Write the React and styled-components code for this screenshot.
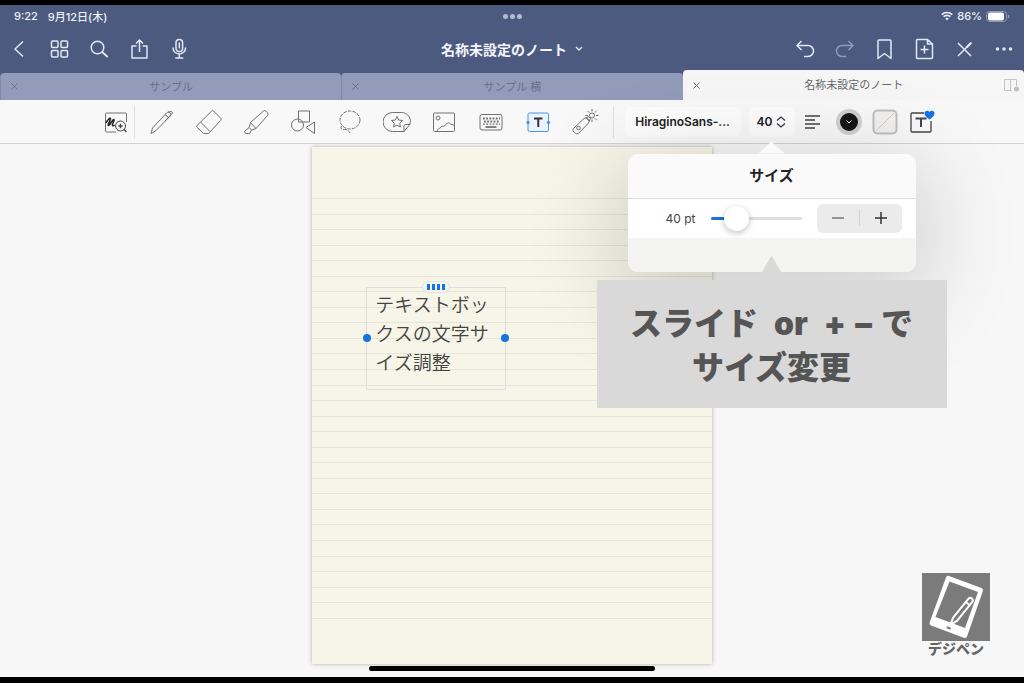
import { useState } from "react";
import styled, { createGlobalStyle } from "styled-components";

const tabs = [
  { id: 1, title: "サンプル" },
  { id: 2, title: "サンプル 横" },
  { id: 3, title: "名称未設定のノート" },
];

const PenIcon = () => (
  <Svg viewBox="0 0 28 28">
    <path d="M3 25.500l1.500-5.500L18.500 5c1-1 2.500-1 3.500 0s1 2.300 0 3.300L7.500 23z M17 6.500l4 3.500 M20 4l3.500-.5 1 1.500L17 13" />
  </Svg>
);

const EraserIcon = () => (
  <Svg viewBox="0 0 28 28">
    <path d="M16.500 3.200a1.500 1.500 0 0 1 2.200 0l7 7a1.500 1.500 0 0 1 0 2.200L13.500 25.500H8.500L2.300 19.500a1.500 1.500 0 0 1 0-2.200z M5.500 14l9.500 9.500" />
  </Svg>
);

const HighlighterIcon = () => (
  <Svg viewBox="0 0 28 28">
    <path d="M8.500 14.500L21.500 3a2 2 0 0 1 2.500.2l1.500 1.600a2 2 0 0 1 .2 2.500L14 20.500z M8.500 14.500l-1.500 5 2.500 2.500 4.500-1.500 M7 19.500L2.500 23.500l1 2h4l2-3.500" />
  </Svg>
);

const ShapesIcon = () => (
  <Svg viewBox="0 0 28 28">
    <rect x="9.500" y="3" width="11" height="11" />
    <circle cx="8.500" cy="17" r="6" />
    <path d="M25.500 14v11.500L17 19.500z" />
  </Svg>
);

const LassoIcon = () => (
  <Svg viewBox="0 0 28 28">
    <ellipse cx="14" cy="12" rx="10" ry="9" strokeDasharray="3.500 1.200" />
    <path d="M5.500 18c-1.500 2.500.5 4 3 3.500 2.500-.3 4 1 5.500 3.500" strokeDasharray="4 1" />
  </Svg>
);

const StickerIcon = () => (
  <Svg viewBox="0 0 28 28">
    <path d="M21 23.500H9.500a9.500 9.500 0 0 1 0-19h9a8.800 8.800 0 0 1 8.300 12z M21 23.500v-5.500c0-1 .5-1.500 1.500-1.500h4.300" />
    <path d="M14 8.500l1.700 3.500 3.800.5-2.800 2.700.7 3.800-3.400-1.800-3.400 1.800.7-3.800-2.800-2.700 3.800-.5z" />
  </Svg>
);

const PictureIcon = () => (
  <Svg viewBox="0 0 28 28">
    <rect x="3.500" y="5" width="21" height="18.500" rx="1" />
    <circle cx="8" cy="10" r="2" />
    <path d="M7 23.500c1-4 3-2.500 4-4.500s2.500.5 4-1.500 4-3.500 5-2 2.500.5 4.500 2" />
  </Svg>
);

const KeyboardIcon = () => (
  <Svg viewBox="0 0 28 28">
    <rect x="3" y="6.500" width="22" height="15.500" rx="2" />
    <path d="M6 10.500h17M7 13.500h15" strokeWidth="2" strokeDasharray="1.800 1.400" />
    <path d="M6 16.200h17" strokeWidth="1.200" strokeDasharray="1.800 1.400" />
    <path d="M8.500 19h11" strokeWidth="1.800" />
  </Svg>
);

const TextIcon = () => (
  <Svg viewBox="0 0 28 28" stroke="#4f94ea">
    <rect x="4" y="5" width="20.500" height="18.500" rx="1.500" fill="#eaf3fe" />
    <path d="M10 10.500h8.500M14.250 10v9" stroke="#333" strokeWidth="2" />
    <circle cx="4" cy="14.500" r="1.200" fill="#3b86e8" />
    <circle cx="24.500" cy="14.500" r="1.200" fill="#3b86e8" />
  </Svg>
);

const LaserIcon = () => (
  <Svg viewBox="0 0 28 28">
    <path d="M2.500 20.500L13 10.500c1.500-1 3-.5 4 .5s1.500 2.500.5 4L8 25c-1.500 1.200-3 1-4.500-.3S1.500 22 2.500 20.500z M15 9.800l3.300 3.400 1.200-2.700-1.800-1.800z" />
    <circle cx="7.500" cy="20" r="1.800" />
    <circle cx="21" cy="7.500" r="2.500" />
    <path d="M21 1v2.500M21 11.500V14M14.500 7.500h2.500M25 7.500h2.500M16.500 3l1.700 1.700M24 10.500l1.700 1.700M25.500 3l-1.700 1.700" />
  </Svg>
);

const tools = [
  { name: "ペン", Icon: PenIcon },
  { name: "消しゴム", Icon: EraserIcon },
  { name: "蛍光ペン", Icon: HighlighterIcon },
  { name: "図形", Icon: ShapesIcon },
  { name: "なげなわ", Icon: LassoIcon },
  { name: "ステッカー", Icon: StickerIcon },
  { name: "画像", Icon: PictureIcon },
  { name: "キーボード", Icon: KeyboardIcon },
  { name: "テキスト", Icon: TextIcon },
  { name: "レーザー", Icon: LaserIcon },
];

const StatusBar = () => (
  <StyledStatus>
    <StatusSide>
      <span>9:22</span>
      <span>9月12日(木)</span>
    </StatusSide>
    <Multitask aria-label="マルチタスク">
      <i />
      <i />
      <i />
    </Multitask>
    <StatusSide $end>
      <svg width="12" height="10" viewBox="0 0 12 10" fill="none" stroke="#eef1f8">
        <path d="M.8 3.600a7.500 7.500 0 0 1 10.400 0M2.600 5.700a4.800 4.800 0 0 1 6.800 0" strokeWidth="1.700" />
        <path d="M6 9.500L4.200 7.500a2.600 2.600 0 0 1 3.600 0z" fill="#eef1f8" stroke="none" />
      </svg>
      <span>86%</span>
      <svg width="24" height="11" viewBox="0 0 24 11" fill="none">
        <rect x=".5" y=".5" width="20" height="10" rx="3" stroke="#8f9ab6" />
        <rect x="2" y="1.500" width="16" height="8" rx="2" fill="#fff" />
        <path d="M22.500 4v3" stroke="#8f9ab6" strokeWidth="1.500" />
      </svg>
    </StatusSide>
  </StyledStatus>
);

const NavBar = () => (
  <StyledNav>
    <NavSide>
      <NavButton aria-label="戻る">
        <Svg viewBox="0 0 24 24" $size={24}>
          <path d="M15 4.500L7 12l8 7.500" />
        </Svg>
      </NavButton>
      <NavButton aria-label="一覧">
        <Svg viewBox="0 0 24 24" $size={24}>
          <rect x="3.500" y="4" width="6.500" height="6.500" rx="1" />
          <rect x="13" y="4" width="6.500" height="6.500" rx="1" />
          <rect x="3.500" y="13.500" width="6.500" height="6.500" rx="1" />
          <rect x="13" y="13.500" width="6.500" height="6.500" rx="1" />
        </Svg>
      </NavButton>
      <NavButton aria-label="検索">
        <Svg viewBox="0 0 24 24" $size={24}>
          <circle cx="9.500" cy="10.500" r="6.300" />
          <path d="M14.200 15l5.500 5" strokeWidth="1.800" />
        </Svg>
      </NavButton>
      <NavButton aria-label="共有">
        <Svg viewBox="0 0 24 24" $size={24}>
          <path d="M8.500 9H4v12h15V9h-4.500M11.500 15V3M8 6.500l3.500-3.500L15 6.500" />
        </Svg>
      </NavButton>
      <NavButton aria-label="録音">
        <Svg viewBox="0 0 24 24" $size={24}>
          <rect x="8" y="2.500" width="6.600" height="12" rx="3.300" />
          <path d="M11.300 5.500v6M5 10.500c0 8.500 12.600 8.500 12.600 0M11.300 17v4M7.300 21h8" />
        </Svg>
      </NavButton>
    </NavSide>
    <NoteTitle>
      名称未設定のノート
      <svg width="8" height="6" viewBox="0 0 8 6" fill="none" stroke="#dfe4f0" strokeWidth="1.400">
        <path d="M1 1l3 3 3-3" />
      </svg>
    </NoteTitle>
    <NavSide $end>
      <NavButton aria-label="元に戻す">
        <Svg viewBox="0 0 24 24" $size={24}>
          <path d="M9.500 4L5 8.500 9.500 13M5 8.500h11a5.500 5.500 0 0 1 0 11h-4" />
        </Svg>
      </NavButton>
      <NavButton aria-label="やり直す" $dim>
        <Svg viewBox="0 0 24 24" $size={24}>
          <path d="M16.500 4L21 8.500 16.500 13M21 8.500H10a5.500 5.500 0 0 0 0 11h4" />
        </Svg>
      </NavButton>
      <NavButton aria-label="ブックマーク">
        <Svg viewBox="0 0 24 24" $size={24}>
          <path d="M6 4a1 1 0 0 1 1-1h11a1 1 0 0 1 1 1v17.500l-6.500-5-6.500 5z" />
        </Svg>
      </NavButton>
      <NavButton aria-label="ページを追加">
        <Svg viewBox="0 0 24 24" $size={24}>
          <path d="M5.500 2.500h10l5 4.500v13.500a1 1 0 0 1-1 1h-14a1 1 0 0 1-1-1v-17a1 1 0 0 1 1-1z M15.500 2.500V7h5 M12.500 8.500v8M8.500 12.500h8" />
        </Svg>
      </NavButton>
      <NavButton aria-label="閲覧モード">
        <Svg viewBox="0 0 24 24" $size={24}>
          <path d="M6 6l13 13M6 19L19.500 5.500" />
          <path d="M14.500 10.500l4.500-4.500" strokeWidth="2.200" />
        </Svg>
      </NavButton>
      <NavButton aria-label="その他">
        <Svg viewBox="0 0 24 24" $size={24} fill="currentColor">
          <circle cx="5.500" cy="12" r="1" />
          <circle cx="12" cy="12" r="1" />
          <circle cx="18.500" cy="12" r="1" />
        </Svg>
      </NavButton>
    </NavSide>
  </StyledNav>
);

const TabBar = ({ active, onSelect }) => (
  <StyledTabs>
    {tabs.map(({ id, title }) => (
      <Tab key={id} $active={id === active}>
        <TabClose aria-label={`${title}を閉じる`}>
          <svg width="7" height="7" viewBox="0 0 7 7" stroke="currentColor">
            <path d="M.5.5l6 6M6.500.5l-6 6" />
          </svg>
        </TabClose>
        <TabTitle onClick={() => onSelect(id)}>{title}</TabTitle>
        {id === active ? (
          <TabClose aria-label="分割表示">
            <svg width="17" height="14" viewBox="0 0 17 14" fill="none" stroke="#c4c4c4">
              <path d="M9 12.500H1.500v-11h12V8M7.500 1.500v11" />
              <circle cx="13.500" cy="11" r="2.500" fill="#c0c0c0" stroke="none" />
            </svg>
          </TabClose>
        ) : (
          <span />
        )}
      </Tab>
    ))}
  </StyledTabs>
);

const SizePopover = ({ size, onChange }) => (
  <PopoverLayer>
    <StyledPopover>
      <PopoverTitle>サイズ</PopoverTitle>
      <PopoverRow>
        <label htmlFor="size">{size} pt</label>
        <Slider
          id="size"
          type="range"
          min="0"
          max="200"
          value={size}
          style={{ "--fill": `${14 + (size / 200) * 72}%` }}
          onChange={(event) => onChange(Number(event.target.value))}
        />
        <Stepper>
          <button aria-label="小さく" onClick={() => onChange(size - 1)}>
            <svg width="14" height="14" viewBox="0 0 14 14" stroke="#777" strokeWidth="1.500">
              <path d="M1 7h12" />
            </svg>
          </button>
          <button aria-label="大きく" onClick={() => onChange(size + 1)}>
            <svg width="14" height="14" viewBox="0 0 14 14" stroke="#333" strokeWidth="1.500">
              <path d="M1 7h12M7 1v12" />
            </svg>
          </button>
        </Stepper>
      </PopoverRow>
      <PopoverFoot />
    </StyledPopover>
    <Callout>
      スライド&ensp;or&ensp;+ − で
      <br />
      サイズ変更
    </Callout>
  </PopoverLayer>
);

const Toolbar = ({ size, setSize }) => (
  <StyledToolbar>
    <ToolButton $width={36} aria-label="ズーム">
      <Svg viewBox="0 0 28 28">
        <path d="M24.500 14V6a1 1 0 0 0-1-1h-19a1 1 0 0 0-1 1v17a1 1 0 0 0 1 1H14" />
        <path d="M4 15c1.500-3 4-5.500 4.500-4.500.5 1.500-3.500 6.500-2 7 1.500 0 4-6.500 5.500-6 1 1-2.500 5-1.500 6 .5.500 1.500 0 2-.500" stroke="#222" strokeWidth="1.600" />
        <circle cx="18.500" cy="18" r="5" fill="#f8f8f8" stroke="#444" />
        <path d="M18.500 15.800v4.400M16.300 18h4.400M22 21.500l2.500 2.500" stroke="#444" strokeWidth="1.300" />
      </Svg>
    </ToolButton>
    <Divider />
    <Tools>
      {tools.map(({ name, Icon }) => (
        <ToolButton key={name} $width={47} aria-label={name}>
          <Icon />
        </ToolButton>
      ))}
    </Tools>
    <Divider />
    <Options>
      <OptionButton $width={116}>HiraginoSans-...</OptionButton>
      <SizeAnchor>
        <OptionButton $width={46}>
          {size}
          <svg width="10" height="14" viewBox="0 0 10 14" fill="none" stroke="#333" strokeWidth="1.200">
            <path d="M1 5.500L5 2l4 3.500M1 8.500L5 12l4-3.500" />
          </svg>
        </OptionButton>
        <SizePopover size={size} onChange={setSize} />
      </SizeAnchor>
    </Options>
    <ToolButton $width={36} aria-label="行揃え">
      <svg width="16" height="16" viewBox="0 0 16 16" stroke="#444" strokeWidth="1.300">
        <path d="M0 2h15M0 6h10M0 10h15M0 14h10" />
      </svg>
    </ToolButton>
    <ToolButton $width={36} aria-label="文字色">
      <ColorDot>
        <svg width="6" height="4" viewBox="0 0 6 4" fill="none" stroke="#fff">
          <path d="M.5.5L3 3 5.500.5" />
        </svg>
      </ColorDot>
    </ToolButton>
    <ToolButton $width={36} aria-label="背景色">
      <svg width="26" height="26" viewBox="0 0 26 26" fill="none">
        <rect x="1.500" y="1.500" width="23" height="23" rx="4" fill="#f1f0ef" stroke="#bebebe" strokeWidth="2" />
        <path d="M4 22L22 4" stroke="#dccfc0" />
      </svg>
    </ToolButton>
    <ToolButton $width={36} aria-label="お気に入りスタイル">
      <svg width="28" height="28" viewBox="0 0 28 28" fill="none" stroke="#444" strokeWidth="1.300">
        <path d="M17 5H5a1 1 0 0 0-1 1v17a1 1 0 0 0 1 1h18a1 1 0 0 0 1-1V13" />
        <path d="M9.500 11.500V10.500h9v1M14 10v9" strokeWidth="2" />
        <path d="M22.500 11.500c-3-2-5-3.500-5-6.200 0-2.800 3.500-3.500 5-1.200 1.500-2.300 5-1.600 5 1.200 0 2.700-2 4.200-5 6.200z" fill="#1474e4" stroke="none" />
      </svg>
    </ToolButton>
  </StyledToolbar>
);

const Note = () => {
  const [text, setText] = useState("テキストボックスの文字サイズ調整");

  return (
    <Page>
      <Rules>
        {Array.from({ length: 28 }, (_, i) => (
          <hr key={i} />
        ))}
      </Rules>
      <TextBox>
        <Grip>
          <i />
          <i />
          <i />
          <i />
        </Grip>
        <textarea
          aria-label="テキストボックス"
          rows="3"
          spellCheck="false"
          value={text}
          onChange={(event) => setText(event.target.value)}
        />
        <Handle />
        <Handle $right />
      </TextBox>
    </Page>
  );
};

const Brand = () => (
  <StyledBrand>
    <svg width="68" height="68" viewBox="0 0 68 68" fill="none">
      <rect width="68" height="68" fill="#7b7b7b" />
      <path d="M27 3l32.500 12a2.500 2.500 0 0 1 1.300 3.200L45 63.500a2.500 2.500 0 0 1-3.200 1.300L9 52.500a2.500 2.500 0 0 1-1.300-3.200L24 4.500a2.300 2.300 0 0 1 3-1.500z" fill="#fff" />
      <path d="M27.500 8.500L56 19 43 55 13.500 44z" fill="#7b7b7b" />
      <path d="M25.500 54.500l2.500 1" stroke="#7b7b7b" strokeWidth="2" strokeLinecap="round" />
      <g transform="translate(30 50) rotate(39)" stroke="#fff" strokeWidth="2">
        <path d="M-1 0L-2.500-5V-29a2.500 2.500 0 0 1 5 0V-5L1 0z" />
        <path d="M-3-25h6" />
      </g>
    </svg>
    デジペン
  </StyledBrand>
);

export default function App() {
  const [active, setActive] = useState(3);
  const [size, setSize] = useState(40);

  return (
    <Screen>
      <GlobalStyle />
      <StatusBar />
      <NavBar />
      <TabBar active={active} onSelect={setActive} />
      <Toolbar size={size} setSize={setSize} />
      <Workspace>
        <Note />
        <Brand />
      </Workspace>
      <HomeBar>
        <i />
      </HomeBar>
    </Screen>
  );
}

const GlobalStyle = createGlobalStyle`
  * {
    box-sizing: border-box;
  }

  body {
    margin: 0;
    background: #000;
    font-family: Inter, "Noto Sans CJK JP", sans-serif;
    color: #222;
  }

  button {
    border: 0;
    padding: 0;
    background: none;
    font: inherit;
    color: inherit;
  }
`;

const Screen = styled.div`
  display: flex;
  flex-direction: column;
  min-height: 100vh;
  border-top: 5px solid #000;
  border-bottom: 6px solid #000;
  background: #4c5a80;
  overflow: hidden;
`;

const Svg = styled.svg.attrs((props) => ({
  fill: props.fill || "none",
  stroke: props.stroke || "currentColor",
}))`
  width: ${(props) => props.$size || 28}px;
  height: ${(props) => props.$size || 28}px;
  stroke-linejoin: round;
  flex: none;
`;

const StyledStatus = styled.header`
  display: grid;
  grid-template-columns: 1fr auto 1fr;
  align-items: center;
  height: 22px;
  padding: 0 14px;
  color: #eef1f8;
  font-size: 11px;
  font-weight: 500;
`;

const StatusSide = styled.div`
  display: flex;
  align-items: center;
  justify-content: ${(props) => (props.$end ? "flex-end" : "flex-start")};
  gap: ${(props) => (props.$end ? "4px" : "10px")};
`;

const Multitask = styled.div`
  display: flex;
  gap: 2px;

  i {
    width: 5px;
    height: 5px;
    border-radius: 50%;
    background: #b4bcd0;
  }
`;

const StyledNav = styled.nav`
  display: grid;
  grid-template-columns: 1fr auto 1fr;
  align-items: center;
  height: 46px;
  padding-bottom: 3px;
`;

const NavSide = styled.div`
  display: flex;
  justify-content: ${(props) => (props.$end ? "flex-end" : "flex-start")};
`;

const NavButton = styled.button`
  display: flex;
  align-items: center;
  justify-content: center;
  width: 40px;
  height: 40px;
  color: ${(props) => (props.$dim ? "#8f9ab6" : "#e3e8f3")};

  svg {
    stroke-width: 1.5px;
  }
`;

const NoteTitle = styled.button`
  display: flex;
  align-items: center;
  gap: 8px;
  color: #f4f6fb;
  font-size: 14px;
  font-weight: 700;
`;

const StyledTabs = styled.div`
  display: grid;
  grid-template-columns: repeat(3, 1fr);
  grid-template-rows: 27px;
  align-items: end;
`;

const Tab = styled.div`
  display: grid;
  grid-template-columns: 26px 1fr 26px;
  align-items: center;
  height: ${(props) => (props.$active ? "30px" : "27px")};
  border-left: 1px solid ${(props) => (props.$active ? "#f6f6f6" : "#7e89ab")};
  border-radius: 4px 4px 0 0;
  background: ${(props) => (props.$active ? "#f6f6f6" : "#929cba")};
  color: ${(props) => (props.$active ? "#666" : "#66708f")};
`;

const TabClose = styled.button`
  display: flex;
  align-items: center;
  justify-content: center;
`;

const TabTitle = styled.button`
  font-size: 11px;
  line-height: 16px;
`;

const StyledToolbar = styled.div`
  position: relative;
  z-index: 1;
  display: flex;
  align-items: center;
  justify-content: center;
  height: 44px;
  padding-left: 12px;
  border-bottom: 1px solid #d2d2d2;
  background: #f8f8f8;
`;

const ToolButton = styled.button`
  display: flex;
  align-items: center;
  justify-content: center;
  width: ${(props) => props.$width}px;
  height: 32px;
  color: #707070;
`;

const Tools = styled.div`
  display: flex;
  margin: 0 4px;
`;

const Divider = styled.span`
  width: 1px;
  height: 32px;
  background: #dedede;
`;

const Options = styled.div`
  display: flex;
  gap: 8px;
  margin-left: 11px;
`;

const OptionButton = styled.button`
  display: flex;
  align-items: center;
  justify-content: center;
  gap: 4px;
  width: ${(props) => props.$width}px;
  height: 30px;
  border-radius: 7px;
  background: #fdfdfd;
  font-size: 12px;
  font-weight: 600;
`;

const ColorDot = styled.span`
  display: flex;
  align-items: center;
  justify-content: center;
  width: 26px;
  height: 26px;
  border: 4px solid #d0d0d0;
  border-radius: 50%;
  background: #161616;
`;

const SizeAnchor = styled.div`
  position: relative;
`;

const PopoverLayer = styled.div`
  position: absolute;
  top: 100%;
  left: 50%;
  display: flex;
  flex-direction: column;
  align-items: center;
  gap: 8px;
  padding-top: 17px;
  transform: translateX(-50%);
  pointer-events: none;

  > * {
    pointer-events: auto;
  }
`;

const StyledPopover = styled.section`
  position: relative;
  width: 288px;
  border-radius: 10px;
  box-shadow: 0 20px 90px 10px rgba(0, 0, 0, 0.17);

  &::before {
    content: "";
    position: absolute;
    bottom: 100%;
    left: 50%;
    width: 26px;
    height: 12px;
    margin-left: -13px;
    background: #fafafa;
    clip-path: polygon(50% 0, 100% 100%, 0 100%);
  }
`;

const PopoverTitle = styled.h2`
  margin: 0;
  border-bottom: 1px solid #dcdce0;
  border-radius: 10px 10px 0 0;
  background: #fafafa;
  font-size: 15px;
  line-height: 44px;
  text-align: center;
`;

const PopoverRow = styled.div`
  display: flex;
  align-items: center;
  justify-content: flex-end;
  gap: 15px;
  height: 39px;
  padding-right: 14px;
  background: #fff;
  color: #444;
  font-size: 12px;
`;

const PopoverFoot = styled.div`
  height: 34px;
  border-radius: 0 0 10px 10px;
  background: #f4f4f2;
`;

const Slider = styled.input`
  width: 91px;
  height: 25px;
  margin: 0;
  appearance: none;
  background: none;

  &::-webkit-slider-runnable-track {
    height: 3px;
    border-radius: 2px;
    background: linear-gradient(
      to right,
      #1474d8 var(--fill),
      #dedede var(--fill)
    );
  }

  &::-webkit-slider-thumb {
    width: 25px;
    height: 25px;
    margin-top: -11px;
    appearance: none;
    border-radius: 50%;
    background: #fff;
    box-shadow: 0 2px 6px rgba(0, 0, 0, 0.25);
  }
`;

const Stepper = styled.div`
  display: flex;
  align-items: center;
  width: 85px;
  height: 29px;
  border-radius: 6px;
  background: #ebebec;

  button {
    flex: 1;
    display: flex;
    justify-content: center;
    align-items: center;
    height: 16px;
  }

  button + button {
    border-left: 1px solid #d0d0d0;
  }
`;

const Callout = styled.p`
  position: relative;
  width: 350px;
  margin: 0;
  padding: 22px 0 18px;
  background: #d9d9d9;
  color: #555;
  font-size: 32px;
  font-weight: 900;
  line-height: 44px;
  text-align: center;
  white-space: nowrap;

  &::before {
    content: "";
    position: absolute;
    bottom: 100%;
    left: 50%;
    width: 28px;
    height: 24px;
    margin-left: -14px;
    background: #d9d9d9;
    clip-path: polygon(50% 0, 100% 100%, 0 100%);
  }
`;

const Workspace = styled.main`
  position: relative;
  flex: 1;
  display: flex;
  justify-content: center;
  min-height: 520px;
  padding-top: 3px;
  background: #f7f7f7;
`;

const Page = styled.article`
  position: relative;
  display: flex;
  width: 39%;
  padding: 51px 0 45px;
  background: #f7f5e7;
  box-shadow: 0 0 4px rgba(0, 0, 0, 0.3);
`;

const Rules = styled.div`
  flex: 1;
  display: flex;
  flex-direction: column;
  justify-content: space-between;

  hr {
    width: 100%;
    height: 1px;
    margin: 0;
    border: 0;
    background: #e6e5da;
  }
`;

const TextBox = styled.div`
  position: absolute;
  top: 27%;
  left: 54px;
  width: 140px;
  height: 103px;
  border: 1px solid #dedee0;

  textarea {
    display: block;
    width: 100%;
    height: 100%;
    padding: 1px 8px;
    border: 0;
    outline: 0;
    resize: none;
    overflow: hidden;
    background: none;
    color: #444;
    font-family: "Noto Sans CJK JP", sans-serif;
    font-size: 19px;
    font-weight: 350;
    line-height: 29px;
  }
`;

const Grip = styled.div`
  position: absolute;
  top: -7px;
  left: 50%;
  display: flex;
  align-items: center;
  justify-content: center;
  gap: 2px;
  width: 28px;
  height: 12px;
  margin-left: -14px;
  border: 1px solid #dfe1e6;
  border-radius: 6px;
  background: #f6f6ef;

  i {
    width: 3px;
    height: 6px;
    background: #1474e4;
  }
`;

const Handle = styled.span`
  position: absolute;
  top: 50%;
  ${(props) => (props.$right ? "right" : "left")}: -4px;
  width: 8px;
  height: 8px;
  margin-top: -4px;
  border-radius: 50%;
  background: #1474e4;
`;

const StyledBrand = styled.div`
  position: absolute;
  right: 34px;
  bottom: 7px;
  display: flex;
  flex-direction: column;
  align-items: center;
  color: #666;
  font-size: 14px;
  font-weight: 900;
  line-height: 16px;
`;

const HomeBar = styled.footer`
  display: flex;
  justify-content: center;
  height: 13px;
  padding-top: 2px;
  background: #f7f7f7;

  i {
    width: 28%;
    height: 5px;
    border-radius: 3px;
    background: #000;
  }
`;
